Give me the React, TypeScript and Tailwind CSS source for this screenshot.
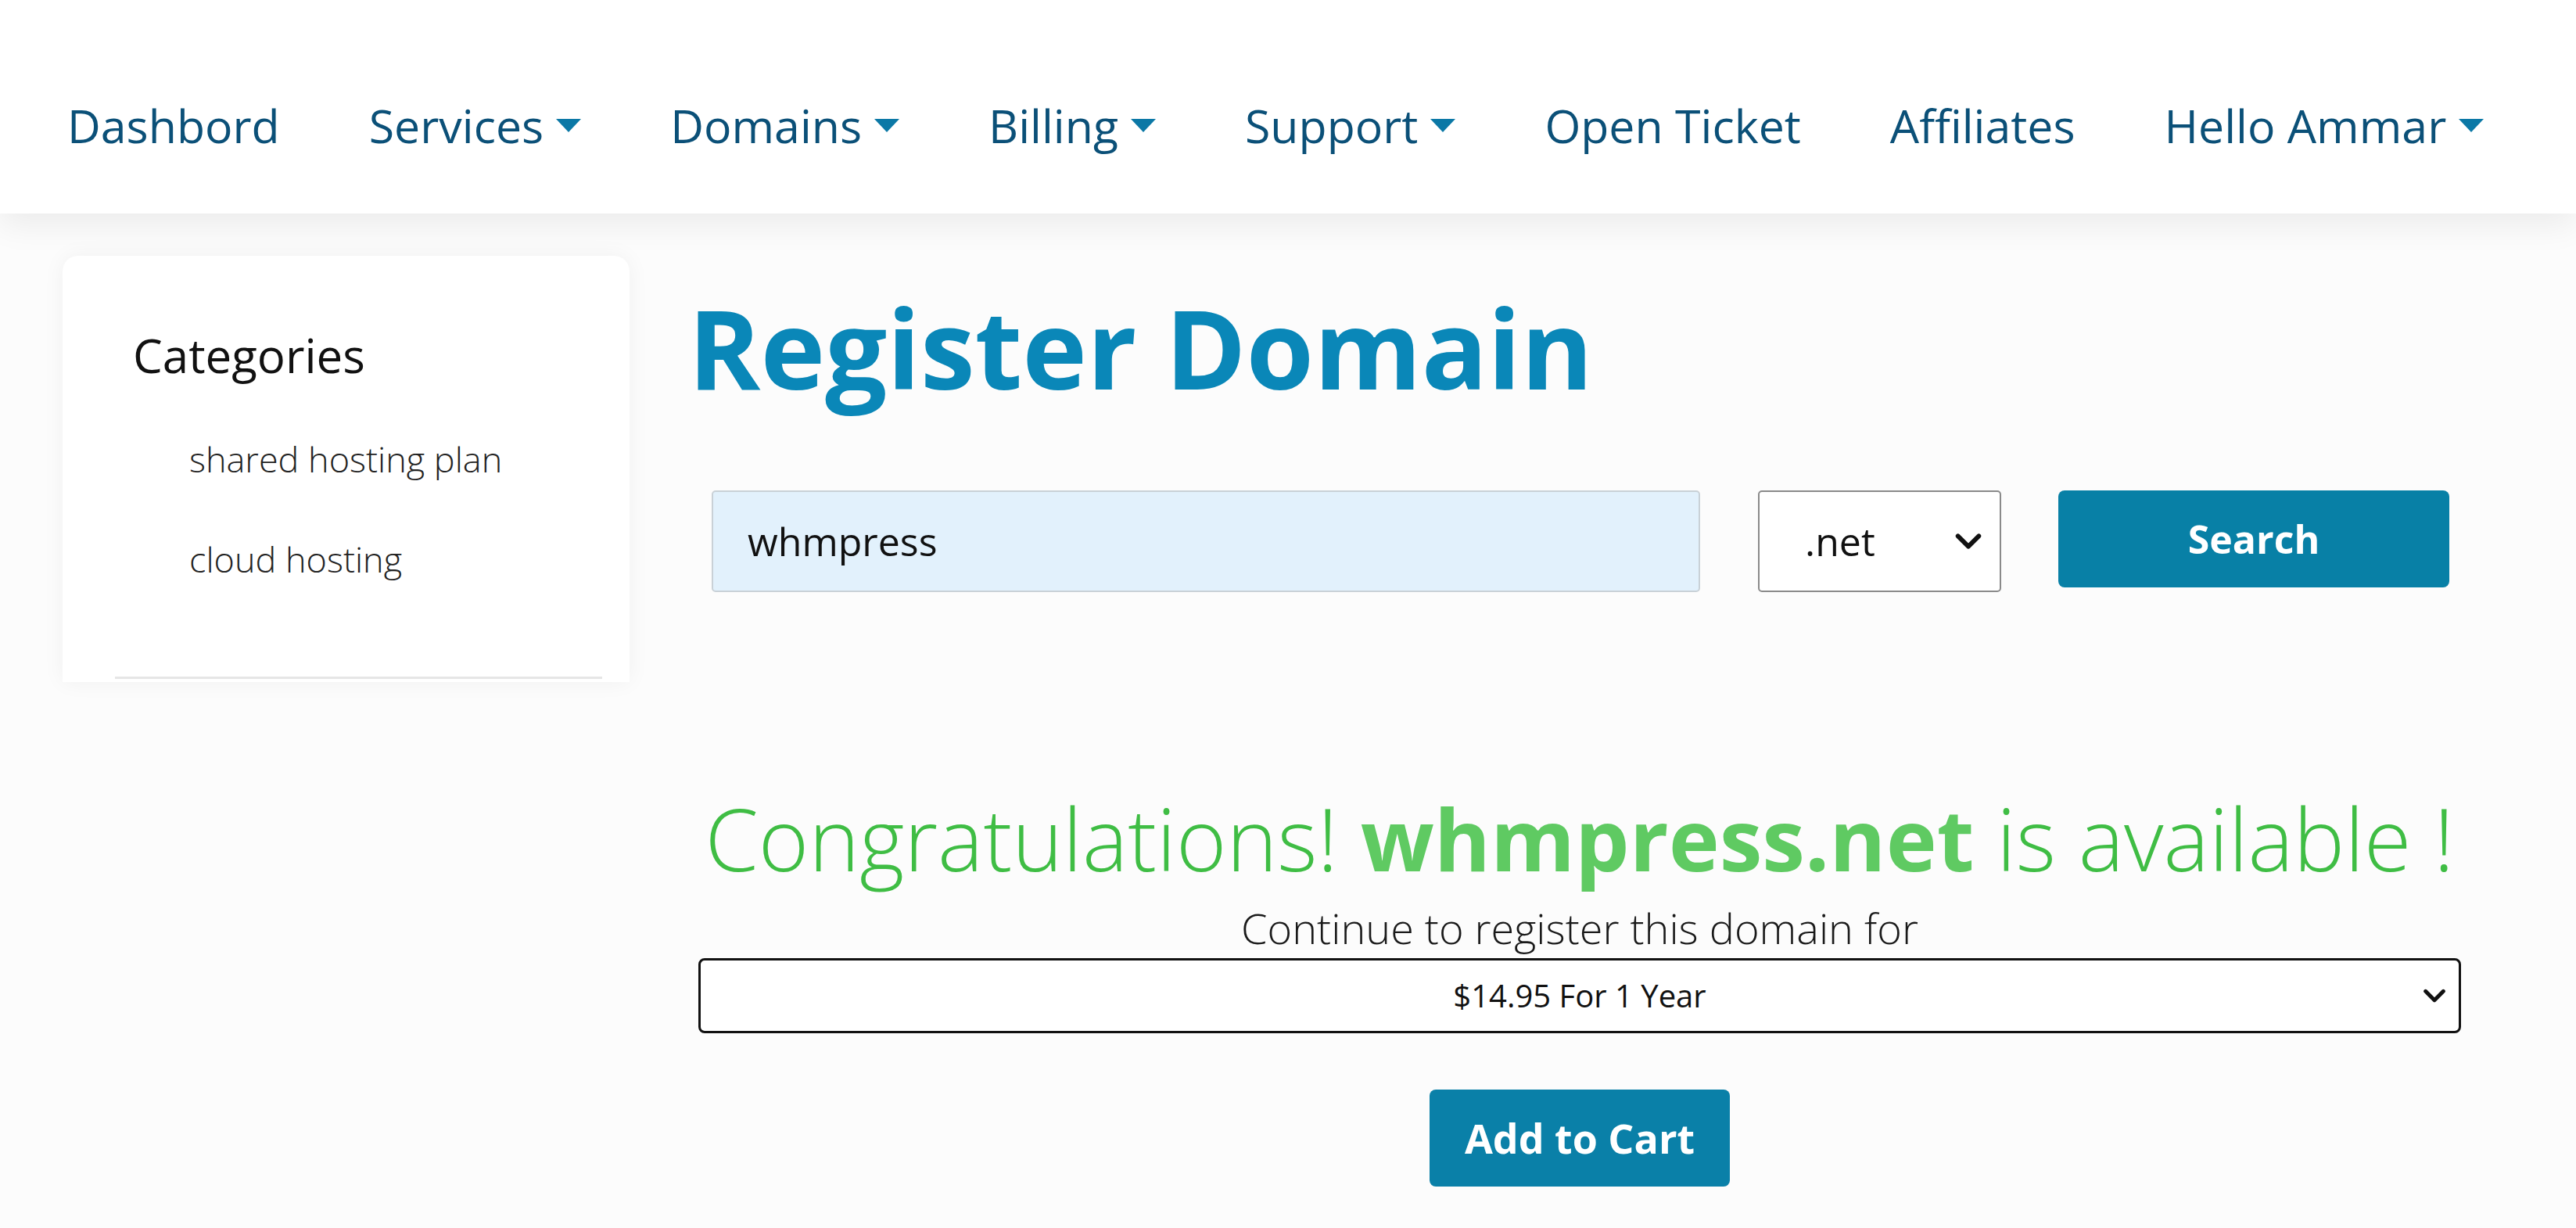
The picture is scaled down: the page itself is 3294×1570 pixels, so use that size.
const navItems = [
  { label: "Dashbord", caret: false },
  { label: "Services", caret: true },
  { label: "Domains", caret: true },
  { label: "Billing", caret: true },
  { label: "Support", caret: true },
  { label: "Open Ticket", caret: false },
  { label: "Affiliates", caret: false },
  { label: "Hello Ammar", caret: true },
];

function Caret() {
  return (
    <svg width="32" height="20" viewBox="0 0 32 20" className="ml-[16px] shrink-0">
      <path d="M0 2h32L16 19z" fill="#0b78a6" />
    </svg>
  );
}

function Chevron({ size = 22 }: { size?: number }) {
  return (
    <svg width={size} height={size} viewBox="0 0 24 24" fill="none" stroke="#111" strokeWidth="3.5" strokeLinecap="round" strokeLinejoin="round">
      <path d="M4 8l8 8 8-8" />
    </svg>
  );
}

export default function App() {
  return (
    <div className="min-h-screen bg-[#fcfcfc] font-['Open_Sans',sans-serif]">
      {/* Top nav */}
      <header className="relative z-10 h-[273px] bg-white pl-[86px] pt-[126px] shadow-[0_14px_40px_rgba(0,0,0,0.07)]">
        <nav className="flex items-center gap-[114px] text-[59px] leading-[68px] text-[#0b5078]">
          {navItems.map((item) => (
            <a key={item.label} href="#" className="flex items-center whitespace-nowrap">
              {item.label}
              {item.caret && <Caret />}
            </a>
          ))}
        </nav>
      </header>

      <div className="flex pl-[80px] pt-[54px]">
        {/* Sidebar */}
        <aside className="h-[545px] w-[725px] shrink-0 rounded-t-[20px] bg-white pt-[97px] shadow-[0_0_28px_rgba(0,0,0,0.05)]">
          <h3 className="pl-[90px] text-[60px] leading-none text-[#111]">Categories</h3>
          <ul className="pl-[162px] text-[45px] font-light leading-none text-[#222]">
            <li className="mt-[80px]">shared hosting plan</li>
            <li className="mt-[83px]">cloud hosting</li>
          </ul>
          <div className="ml-[67px] mr-[35px] mt-[128px] h-[3px] bg-[#e6e6e6]" />
        </aside>

        {/* Main */}
        <main className="ml-[75px] w-[2267px]">
          <h1 className="mt-[47px] text-[140px] font-bold leading-none text-[#0a87b8]">
            Register Domain
          </h1>

          <div className="mt-[113px] flex pl-[30px]">
            <input
              defaultValue="whmpress"
              className="h-[130px] w-[1264px] rounded-[5px] border-2 border-[#c9d1d7] bg-[#e2f1fc] pl-[44px] text-[50px] text-[#111] outline-none"
            />
            <div className="ml-[74px] flex h-[130px] w-[311px] items-center justify-between rounded-[5px] border-2 border-[#8a8a8a] bg-white pl-[58px] pr-[20px] text-[50px] text-[#111]">
              <span>.net</span>
              <Chevron size={40} />
            </div>
            <button className="ml-[73px] h-[124px] w-[500px] rounded-[8px] bg-[#0880a6] text-[50px] font-bold text-white">
              Search
            </button>
          </div>

          <div className="mt-[259px] flex flex-col items-center pl-[13px]">
            <p className="whitespace-nowrap text-[110px] font-light leading-none text-[#3fbd44]">
              Congratulations! <span className="font-bold text-[#5fca62]">whmpress.net</span> is available !
            </p>
            <p className="mt-[33px] text-[54px] font-light leading-none text-[#1a1a1a]">
              Continue to register this domain for
            </p>
            <div className="relative mt-[12px] flex h-[96px] w-[2254px] items-center justify-center rounded-[8px] border-[3px] border-[#111] bg-white text-[40px] text-[#111]">
              <span>$14.95 For 1 Year</span>
              <span className="absolute right-[14px] top-1/2 -translate-y-1/2">
                <Chevron size={34} />
              </span>
            </div>
            <button className="mt-[72px] h-[124px] w-[384px] rounded-[8px] bg-[#0a80a8] text-[52px] font-bold text-white">
              Add to Cart
            </button>
          </div>
        </main>
      </div>
    </div>
  );
}
